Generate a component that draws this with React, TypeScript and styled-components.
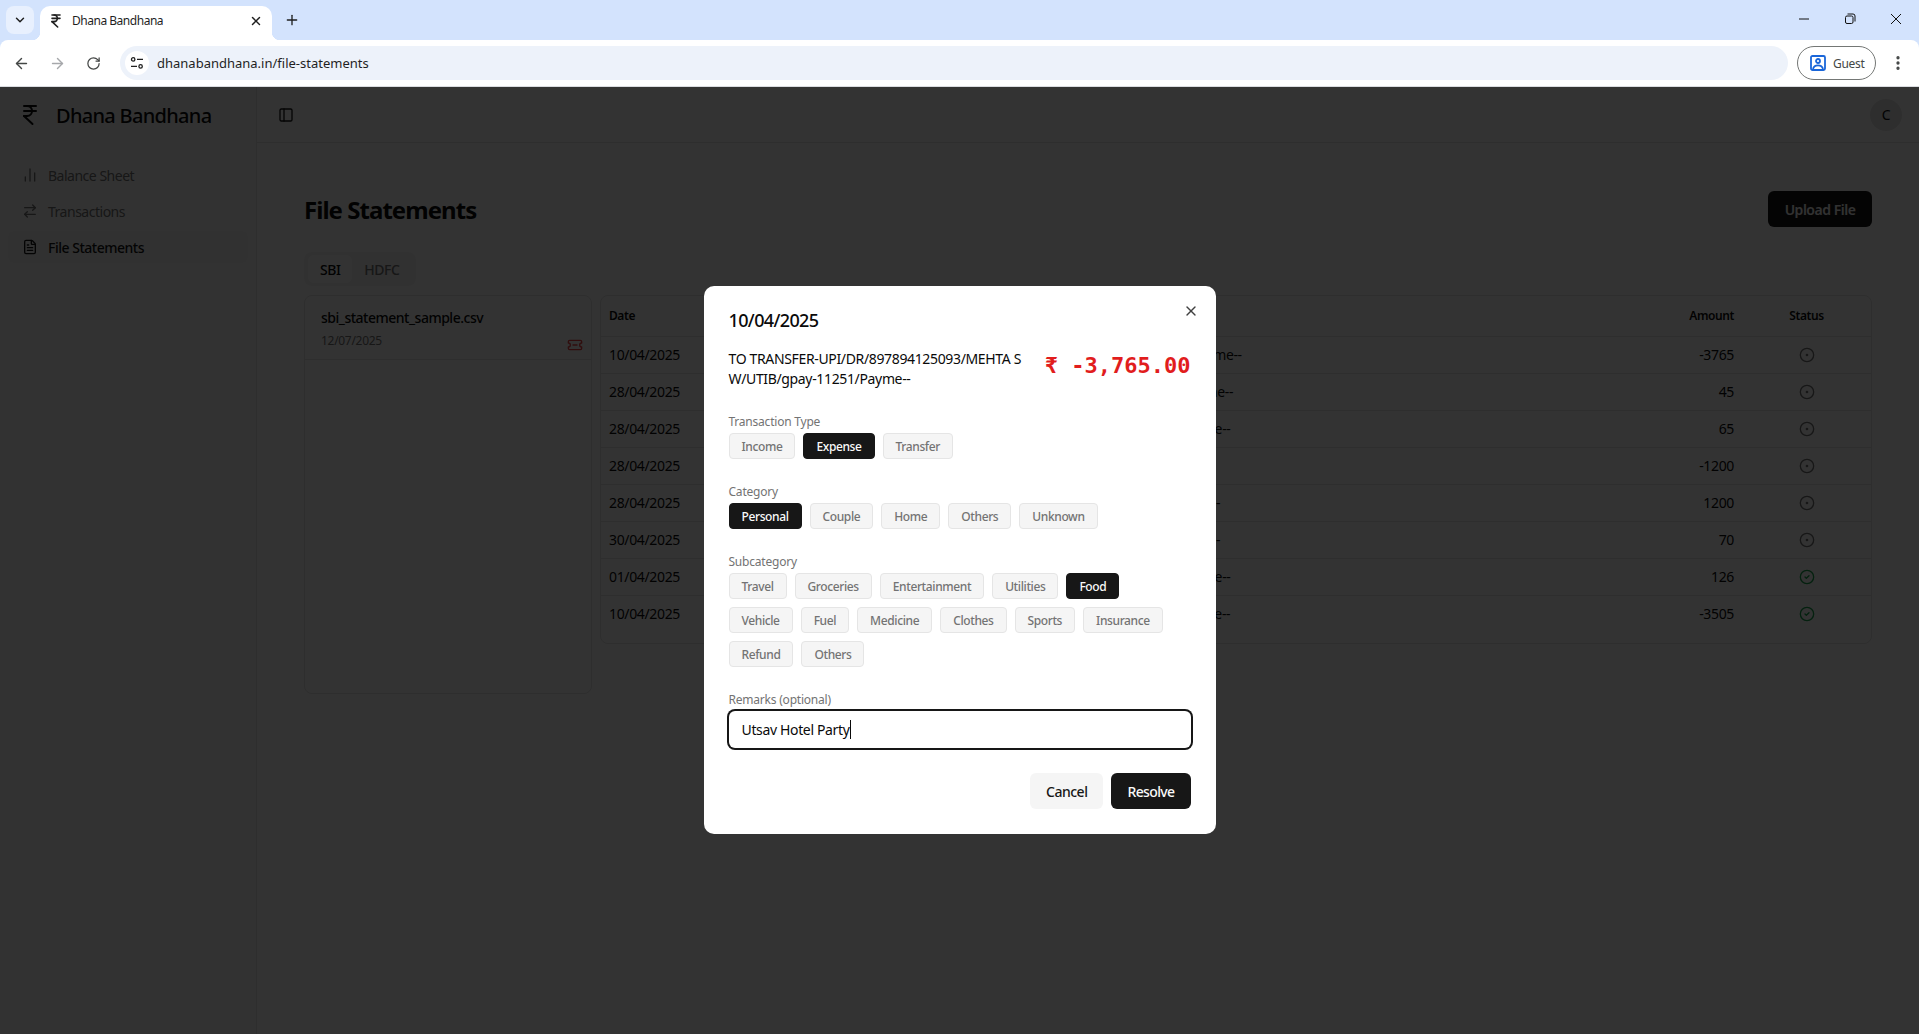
import {FC} from 'react'
import styled, {createGlobalStyle} from 'styled-components'
import {
    ArrowLeft,
    ArrowRight,
    ArrowRightLeft,
    ChartNoAxesColumn,
    ChevronDown,
    CircleCheck,
    CircleDot,
    EllipsisVertical,
    FileText,
    IndianRupee,
    PanelLeft,
    Plus,
    RotateCw,
    TicketMinus,
    X
} from 'lucide-react'

const SANS = '"Noto Sans", "Open Sans", "Liberation Sans", sans-serif'

const rows = [
    {date: '10/04/2025', text: 'TO TRANSFER-UPI/DR/897894125093/MEHTA S W/UTIB/gpay-11251/Payme--', amount: '-3765', done: false},
    {date: '28/04/2025', text: 'BY TRANSFER-UPI/CR/511842097316/MEHTA SH/UTIB/gpay-11251/Payme--', amount: '45', done: false},
    {date: '28/04/2025', text: 'BY TRANSFER-UPI/CR/511842553108/MEHTA SE/UTIB/gpay-11251/Payme--', amount: '65', done: false},
    {date: '28/04/2025', text: 'TO TRANSFER-UPI/DR/511860174425/MEHTA S/UTIB/gpay-11/Payme--', amount: '-1200', done: false},
    {date: '28/04/2025', text: 'BY TRANSFER-UPI/CR/511860174425/MEHTA St/UTIB/gpay-1125/Payme--', amount: '1200', done: false},
    {date: '30/04/2025', text: 'BY TRANSFER-UPI/CR/512014773260/MEHTA St/UTIB/gpay-1125/Payme--', amount: '70', done: false},
    {date: '01/04/2025', text: 'BY TRANSFER-UPI/CR/509155238841/MEHTA SE/UTIB/gpay-11251/Payme--', amount: '126', done: true},
    {date: '10/04/2025', text: 'TO TRANSFER-UPI/DR/510072648193/MEHTA SI/UTIB/gpay-11251/Payme--', amount: '-3505', done: true}
]

const types = ['Income', 'Expense', 'Transfer']
const categories = ['Personal', 'Couple', 'Home', 'Others', 'Unknown']
const subcategories = ['Travel', 'Groceries', 'Entertainment', 'Utilities', 'Food', 'Vehicle', 'Fuel', 'Medicine', 'Clothes', 'Sports', 'Insurance', 'Refund', 'Others']

const ChipGroup: FC<{title: string; items: string[]; selected: string}> = ({title, items, selected}) => (
    <Section>
        <FieldLabel>{title}</FieldLabel>
        <Chips>
            {items.map((item) => (
                <Chip key={item} $active={item === selected}>{item}</Chip>
            ))}
        </Chips>
    </Section>
)

const BrowserChrome: FC = () => (
    <Chrome>
        <TabStrip>
            <TabSearch><ChevronDown size={14} strokeWidth={2.5} /></TabSearch>
            <Tab>
                <IndianRupee size={16} strokeWidth={2.4} />
                <TabTitle>Dhana Bandhana</TabTitle>
                <X size={14} strokeWidth={2.5} />
            </Tab>
            <NewTab><Plus size={16} strokeWidth={2} /></NewTab>
            <WindowControls>
                <WindowButton>
                    <svg width="12" height="12" viewBox="0 0 12 12"><path d="M1 6h10" stroke="#111" strokeWidth="1" /></svg>
                </WindowButton>
                <WindowButton>
                    <svg width="12" height="12" viewBox="0 0 12 12" fill="none" stroke="#111">
                        <rect x="1.5" y="3" width="7.5" height="7.5" rx="1.5" />
                        <path d="M3.5 1h5.5a2 2 0 0 1 2 2v5.5" />
                    </svg>
                </WindowButton>
                <WindowButton>
                    <svg width="12" height="12" viewBox="0 0 12 12"><path d="M1 1l10 10M11 1L1 11" stroke="#111" strokeWidth="1" /></svg>
                </WindowButton>
            </WindowControls>
        </TabStrip>
        <Toolbar>
            <NavButton><ArrowLeft size={17} /></NavButton>
            <NavButton $disabled><ArrowRight size={17} /></NavButton>
            <NavButton><RotateCw size={15} /></NavButton>
            <AddressBar>
                <TuneBadge>
                    <svg width="14" height="14" viewBox="0 0 14 14" fill="none" stroke="#1f1f1f" strokeWidth="1.3">
                        <circle cx="3.2" cy="3.4" r="1.7" />
                        <path d="M7 3.4h6M1 10.4h6" />
                        <circle cx="10.6" cy="10.4" r="1.7" />
                    </svg>
                </TuneBadge>
                <UrlText>dhanabandhana.in/file-statements</UrlText>
            </AddressBar>
            <GuestChip>
                <svg width="16" height="16" viewBox="0 0 16 16" fill="none" stroke="#1a66d9" strokeWidth="1.8">
                    <rect x="1" y="1" width="14" height="14" rx="1.5" />
                    <circle cx="8" cy="6" r="2" />
                    <path d="M3 14c.6-2.6 2.6-3.6 5-3.6s4.400 1 5 3.600" />
                </svg>
                <span>Guest</span>
            </GuestChip>
            <MenuDots><EllipsisVertical size={18} strokeWidth={2.4} /></MenuDots>
        </Toolbar>
    </Chrome>
)

const Sidebar: FC = () => (
    <Side>
        <Brand>
            <IndianRupee size={24} strokeWidth={2} />
            <BrandName>Dhana Bandhana</BrandName>
        </Brand>
        <Nav>
            <NavItem><ChartNoAxesColumn size={16} /><span>Balance Sheet</span></NavItem>
            <NavItem><ArrowRightLeft size={16} /><span>Transactions</span></NavItem>
            <NavItem $active><FileText size={16} /><span>File Statements</span></NavItem>
        </Nav>
    </Side>
)

const Statements: FC = () => (
    <Main>
        <TopBar>
            <PanelLeft size={16} />
            <Avatar>C</Avatar>
        </TopBar>
        <Content>
            <TitleRow>
                <PageTitle>File Statements</PageTitle>
                <UploadButton>Upload File</UploadButton>
            </TitleRow>
            <TabsList>
                <TabTrigger $active>SBI</TabTrigger>
                <TabTrigger>HDFC</TabTrigger>
            </TabsList>
            <Panels>
                <FileCard>
                    <FileItem>
                        <FileName>sbi_statement_sample.csv</FileName>
                        <FileMeta>
                            <FileDate>12/07/2025</FileDate>
                            <DeleteIcon size={16} color="#ef4444" />
                        </FileMeta>
                    </FileItem>
                </FileCard>
                <TableCard>
                    <Table>
                        <colgroup>
                            <col width={155} />
                            <col />
                            <col width={130} />
                            <col width={129} />
                        </colgroup>
                        <thead>
                            <tr>
                                <HeadCell>Date</HeadCell>
                                <HeadCell>Description</HeadCell>
                                <HeadCell $align="right">Amount</HeadCell>
                                <HeadCell $align="center">Status</HeadCell>
                            </tr>
                        </thead>
                        <tbody>
                            {rows.map((row, i) => (
                                <BodyRow key={i}>
                                    <BodyCell>{row.date}</BodyCell>
                                    <BodyCell>{row.text}</BodyCell>
                                    <BodyCell $align="right">{row.amount}</BodyCell>
                                    <BodyCell $align="center">
                                        <StatusIcon>
                                            {row.done ? <CircleCheck size={16} color="#16a34a" /> : <CircleDot size={16} color="#737373" />}
                                        </StatusIcon>
                                    </BodyCell>
                                </BodyRow>
                            ))}
                        </tbody>
                    </Table>
                </TableCard>
            </Panels>
        </Content>
    </Main>
)

const ResolveDialog: FC = () => (
    <Overlay>
        <Dialog>
            <CloseButton><X size={16} /></CloseButton>
            <DialogTitle>10/04/2025</DialogTitle>
            <Summary>
                <SummaryText>TO TRANSFER-UPI/DR/897894125093/MEHTA S W/UTIB/gpay-11251/Payme--</SummaryText>
                <AmountText>₹ -3,765.00</AmountText>
            </Summary>
            <ChipGroup title="Transaction Type" items={types} selected="Expense" />
            <ChipGroup title="Category" items={categories} selected="Personal" />
            <ChipGroup title="Subcategory" items={subcategories} selected="Food" />
            <Section>
                <FieldLabel>Remarks <Optional>(optional)</Optional></FieldLabel>
                <RemarksField>Utsav Hotel Party<Caret /></RemarksField>
            </Section>
            <Actions>
                <ActionButton>Cancel</ActionButton>
                <ActionButton $primary>Resolve</ActionButton>
            </Actions>
        </Dialog>
    </Overlay>
)

const App: FC = () => (
    <>
        <GlobalStyle />
        <Screen>
            <BrowserChrome />
            <Shell>
                <Sidebar />
                <Statements />
                <ResolveDialog />
            </Shell>
        </Screen>
    </>
)

const GlobalStyle = createGlobalStyle`
    html, body {
        margin: 0;
        padding: 0;
        overflow: hidden;
        background: #fff;
    }

    * {
        box-sizing: border-box;
        letter-spacing: -0.025em;
    }

    body {
        font-family: ${SANS};
        color: #0a0a0a;
    }
`

const Screen = styled.div`
    width: 1919px;
    height: 1034px;
    display: flex;
    flex-direction: column;
`

const Chrome = styled.div`
    height: 87px;
    flex: none;
    background: #d3e3fd;
    border-bottom: 1px solid #dadce0;
`

const TabStrip = styled.div`
    height: 40px;
    display: flex;
    align-items: flex-end;
    padding-left: 6px;
`

const TabSearch = styled.div`
    width: 28px;
    height: 28px;
    margin-bottom: 6px;
    margin-right: 6px;
    display: flex;
    align-items: center;
    justify-content: center;
    border-radius: 8px;
    background: #e8f0fe;
    color: #1f1f1f;
`

const Tab = styled.div`
    position: relative;
    width: 232px;
    height: 34px;
    display: flex;
    align-items: center;
    padding: 0 9px 5px 8px;
    background: #fff;
    border-radius: 10px 10px 0 0;
    color: #1f1f1f;

    &::before,
    &::after {
        content: '';
        position: absolute;
        bottom: 0;
        width: 8px;
        height: 8px;
    }

    &::before {
        left: -8px;
        background: radial-gradient(circle at 0 0, transparent 8px, #fff 8.5px);
    }

    &::after {
        right: -8px;
        background: radial-gradient(circle at 100% 0, transparent 8px, #fff 8.5px);
    }
`

const TabTitle = styled.span`
    flex: 1;
    margin-left: 8px;
    font-size: 12px;
    letter-spacing: -0.04em;
    color: #1f1f1f;
`

const NewTab = styled.div`
    width: 28px;
    height: 28px;
    margin: 0 0 6px 6px;
    display: flex;
    align-items: center;
    justify-content: center;
    color: #1f1f1f;
`

const WindowControls = styled.div`
    margin-left: auto;
    height: 40px;
    display: flex;
    align-self: flex-start;
`

const WindowButton = styled.div`
    width: 46px;
    height: 38px;
    display: flex;
    align-items: center;
    justify-content: center;
`

const Toolbar = styled.div`
    height: 46px;
    display: flex;
    align-items: center;
    background: #fff;
    border-radius: 8px 8px 0 0;
    padding-left: 3px;
`

const NavButton = styled.div<{$disabled?: boolean}>`
    width: 36px;
    height: 34px;
    display: flex;
    align-items: center;
    justify-content: center;
    color: ${(p) => (p.$disabled ? '#a6a8ab' : '#444746')};
`

const AddressBar = styled.div`
    width: 1668px;
    height: 34px;
    margin-left: 9px;
    display: flex;
    align-items: center;
    padding-left: 5px;
    background: #edf2fa;
    border-radius: 17px;
`

const TuneBadge = styled.div`
    width: 24px;
    height: 24px;
    display: flex;
    align-items: center;
    justify-content: center;
    border-radius: 50%;
    background: #fff;
`

const UrlText = styled.span`
    margin-left: 8px;
    font-size: 13px;
    letter-spacing: 0;
    color: #1f1f1f;
`

const GuestChip = styled.div`
    width: 79px;
    height: 34px;
    margin-left: 9px;
    display: flex;
    align-items: center;
    gap: 7px;
    padding-left: 12px;
    border: 1px solid #747775;
    border-radius: 17px;
    font-size: 12px;
    letter-spacing: -0.035em;
    color: #444746;
`

const MenuDots = styled.div`
    width: 43px;
    display: flex;
    justify-content: center;
    color: #444746;
`

const Shell = styled.div`
    position: relative;
    flex: 1;
    display: flex;
    min-height: 0;
`

const Side = styled.aside`
    width: 257px;
    flex: none;
    background: #fafafa;
    border-right: 1px solid #e5e5e5;
    padding: 0 8px;
`

const Brand = styled.div`
    height: 56px;
    display: flex;
    align-items: center;
    gap: 14px;
    padding-left: 10px;
`

const BrandName = styled.span`
    font-size: 20px;
    font-weight: 500;
    letter-spacing: -0.035em;
`

const Nav = styled.nav`
    margin-top: 16px;
    display: flex;
    flex-direction: column;
    gap: 4px;
`

const NavItem = styled.div<{$active?: boolean}>`
    height: 32px;
    display: flex;
    align-items: center;
    gap: 10px;
    padding: 0 14px;
    border-radius: 6px;
    font-size: 14px;
    font-weight: ${(p) => (p.$active ? 500 : 400)};
    color: ${(p) => (p.$active ? '#171717' : '#737373')};
    background: ${(p) => (p.$active ? '#f5f5f5' : 'transparent')};

    span {
        letter-spacing: -0.035em;
    }
`

const Main = styled.main`
    flex: 1;
    min-width: 0;
    background: #fff;
`

const TopBar = styled.header`
    height: 56px;
    display: flex;
    align-items: center;
    justify-content: space-between;
    padding: 0 17px 0 21px;
    border-bottom: 1px solid #e5e5e5;
    color: #171717;
`

const Avatar = styled.div`
    width: 32px;
    height: 32px;
    display: flex;
    align-items: center;
    justify-content: center;
    border-radius: 50%;
    background: #e5e5e5;
    color: #0a0a0a;
    font-size: 14px;
`

const Content = styled.div`
    padding: 48px 47px 0 47px;
`

const TitleRow = styled.div`
    display: flex;
    align-items: center;
    justify-content: space-between;
`

const PageTitle = styled.h1`
    margin: 0;
    font-size: 24px;
    font-weight: 700;
    letter-spacing: -0.04em;
`

const UploadButton = styled.div`
    width: 104px;
    height: 36px;
    display: flex;
    align-items: center;
    justify-content: center;
    border-radius: 6px;
    background: #171717;
    color: #fafafa;
    font-size: 14px;
    font-weight: 600;
    letter-spacing: -0.035em;
`

const TabsList = styled.div`
    margin-top: 25px;
    width: 112px;
    height: 34px;
    display: flex;
    align-items: center;
    padding: 0 4px;
    background: #f5f5f5;
    border-radius: 8px;
`

const TabTrigger = styled.div<{$active?: boolean}>`
    height: 28px;
    padding: 0 12px;
    display: flex;
    align-items: center;
    border-radius: 6px;
    font-size: 14px;
    font-weight: 500;
    letter-spacing: -0.035em;
    color: ${(p) => (p.$active ? '#0a0a0a' : '#737373')};
    background: ${(p) => (p.$active ? '#fff' : 'transparent')};
`

const Panels = styled.div`
    margin-top: 9px;
    display: flex;
    align-items: flex-start;
    gap: 8px;
`

const FileCard = styled.div`
    width: 288px;
    height: 399px;
    flex: none;
    border: 1px solid #e5e5e5;
    border-radius: 8px;
`

const FileItem = styled.div`
    height: 64px;
    padding: 12px 8px 0 16px;
    border-bottom: 1px solid #e5e5e5;
`

const FileName = styled.div`
    font-size: 14px;
    font-weight: 500;
    line-height: 20px;
    letter-spacing: -0.035em;
`

const FileMeta = styled.div`
    display: flex;
    justify-content: space-between;
    align-items: flex-end;
    margin-top: 3px;
`

const FileDate = styled.div`
    font-size: 12px;
    line-height: 20px;
    color: #737373;
`

const DeleteIcon = styled(TicketMinus)`
    margin-bottom: -2px;
`

const TableCard = styled.div`
    flex: 1;
    min-width: 0;
    height: 349px;
    border: 1px solid #e5e5e5;
    border-radius: 8px;
`

const Table = styled.table`
    width: 100%;
    table-layout: fixed;
    border-collapse: collapse;
`

const HeadCell = styled.th<{$align?: string}>`
    height: 40px;
    padding: 0 8px;
    font-size: 12px;
    font-weight: 600;
    letter-spacing: -0.035em;
    text-align: ${(p) => p.$align || 'left'};
    border-bottom: 1px solid #e5e5e5;
`

const BodyRow = styled.tr`
    &:not(:last-child) {
        border-bottom: 1px solid #e5e5e5;
    }
`

const BodyCell = styled.td<{$align?: string}>`
    height: 37px;
    padding: 0 8px;
    font-size: 14px;
    white-space: nowrap;
    overflow: hidden;
    text-align: ${(p) => p.$align || 'left'};
`

const StatusIcon = styled.span`
    display: flex;
    justify-content: center;
`

const Overlay = styled.div`
    position: absolute;
    inset: 0;
    display: flex;
    align-items: center;
    justify-content: center;
    padding-bottom: 1px;
    background: rgba(0, 0, 0, 0.8);
`

const Dialog = styled.div`
    position: relative;
    width: 512px;
    padding: 25px;
    background: #fff;
    border-radius: 10px;
    display: flex;
    flex-direction: column;
`

const CloseButton = styled.div`
    position: absolute;
    top: 17px;
    right: 17px;
    display: flex;
    color: #404040;
`

const DialogTitle = styled.h2`
    margin: 0 0 20px;
    font-size: 18px;
    line-height: 18px;
    font-weight: 500;
    letter-spacing: -0.035em;
`

const Summary = styled.div`
    display: flex;
    justify-content: space-between;
    gap: 16px;
`

const SummaryText = styled.div`
    width: 298px;
    font-size: 14px;
    line-height: 20px;
    word-break: break-all;
`

const AmountText = styled.div`
    font-family: "DejaVu Sans Mono", "Liberation Mono", monospace;
    font-size: 22px;
    line-height: 34px;
    font-weight: 700;
    letter-spacing: 0;
    color: #e11d1d;
    white-space: nowrap;
`

const Section = styled.div`
    margin-top: 25px;
`

const FieldLabel = styled.div`
    font-size: 12px;
    line-height: 16px;
    margin-bottom: 3px;
    letter-spacing: -0.018em;
    color: #737373;
`

const Optional = styled.span`
    letter-spacing: -0.018em;
    color: #737373;
`

const Chips = styled.div`
    display: flex;
    flex-wrap: wrap;
    gap: 8px;
    max-width: 458px;
`

const Chip = styled.div<{$active?: boolean}>`
    height: 26px;
    display: flex;
    align-items: center;
    padding: 0 12px;
    border: 1px solid ${(p) => (p.$active ? '#171717' : '#e5e5e5')};
    border-radius: 4px;
    font-size: 12px;
    font-weight: 500;
    letter-spacing: -0.032em;
    color: ${(p) => (p.$active ? '#fafafa' : '#737373')};
    background: ${(p) => (p.$active ? '#171717' : '#f5f5f5')};
`

const RemarksField = styled.div`
    height: 37px;
    display: flex;
    align-items: center;
    padding: 0 13px;
    border-radius: 6px;
    box-shadow: 0 0 0 2px #171717;
    font-size: 14px;
    color: #0a0a0a;
`

const Caret = styled.span`
    width: 1px;
    height: 19px;
    background: #0a0a0a;
`

const Actions = styled.div`
    margin-top: 25px;
    display: flex;
    justify-content: flex-end;
    gap: 8px;
`

const ActionButton = styled.div<{$primary?: boolean}>`
    height: 36px;
    padding: 0 16px;
    display: flex;
    align-items: center;
    border-radius: 6px;
    font-size: 14px;
    font-weight: 500;
    letter-spacing: ${(p) => (p.$primary ? '-0.045em' : '-0.035em')};
    color: ${(p) => (p.$primary ? '#fafafa' : '#171717')};
    background: ${(p) => (p.$primary ? '#171717' : '#f5f5f5')};
`

export default App
